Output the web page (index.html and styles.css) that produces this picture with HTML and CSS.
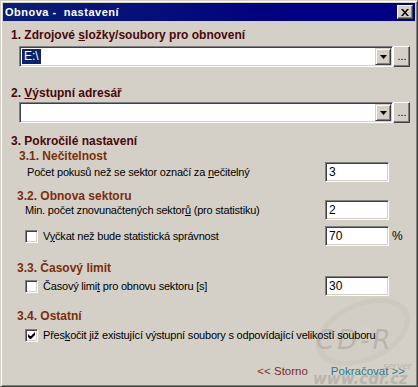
FILE: index.html
```html
<!DOCTYPE html>
<html lang="cs">
<head>
    <meta charset="UTF-8">
    <title>Obnova - nastavení</title>
    <link rel="stylesheet" href="styles.css">
</head>
<body>

<div class="window">
    <div class="caption">
        <span class="caption-title">Obnova -  nastavení</span>
        <div class="caption-close">
            <svg width="8" height="7" viewBox="0 0 8 7"><path d="M0 0h2l2 2.5 2-2.5h2l-3 3.5 3 3.5h-2l-2-2.5-2 2.5h-2l3-3.5z" fill="#000"/></svg>
        </div>
    </div>

    <div class="content">
        <svg class="watermark" width="116" height="100" viewBox="0 0 116 100">
            <ellipse cx="58" cy="42" rx="50" ry="30" transform="rotate(-24 58 42)" fill="#cdc9c1"/>
            <ellipse cx="58" cy="42" rx="44" ry="25" transform="rotate(-24 58 42)" fill="#d2cec6"/>
            <ellipse cx="58" cy="42" rx="9" ry="5" transform="rotate(-24 58 42)" fill="#d4d0c8"/>
            <text x="11" y="59" font-family="DejaVu Sans, sans-serif" font-size="26" font-style="italic" letter-spacing="3" fill="#b9b5ad">CD-R</text>
            <text x="78" y="79" font-family="DejaVu Sans, sans-serif" font-size="9" font-style="italic" fill="#b9b5ad">server</text>
            <text x="8" y="94" font-family="DejaVu Sans, sans-serif" font-size="15" font-weight="bold" font-style="italic" fill="#b9b5ad">www.cdr.cz</text>
        </svg>

        <div class="section-title">1. Zdrojové <u>s</u>ložky/soubory pro obnovení</div>
        <div class="path-row">
            <div class="combo">
                <div class="combo-field"><span class="selected">E:\</span></div>
                <div class="combo-btn"><svg width="7" height="4" viewBox="0 0 7 4"><path d="M0 0h7l-3.5 4z" fill="#000"/></svg></div>
            </div>
            <div class="browse">...</div>
        </div>

        <div class="section-title second">2. <u>V</u>ýstupní adresář</div>
        <div class="path-row tight">
            <div class="combo">
                <div class="combo-field"></div>
                <div class="combo-btn"><svg width="7" height="4" viewBox="0 0 7 4"><path d="M0 0h7l-3.5 4z" fill="#000"/></svg></div>
            </div>
            <div class="browse">...</div>
        </div>

        <div class="section-title third">3. Pokročilé nastavení</div>

        <div class="sub-title first">3.1. Nečitelnost</div>
        <div class="option-row row-retries">
            <span class="option-label indent"><span>Počet pokusů než se sektor označí za <u>n</u>ečitelný</span></span>
            <div class="field">3</div>
            <span class="unit"></span>
        </div>

        <div class="sub-title sector">3.2. Obnova sektoru</div>
        <div class="option-row row-min">
            <span class="option-label"><span>Min. počet znovunačtených sektor<u>ů</u> (pro statistiku)</span></span>
            <div class="field">2</div>
            <span class="unit"></span>
        </div>
        <div class="option-row row-wait">
            <span class="option-label"><span class="checkbox"></span><span>V<u>y</u>čkat než bude statistická správnost</span></span>
            <div class="field">70</div>
            <span class="unit">%</span>
        </div>

        <div class="sub-title limit">3.3. Časový limit</div>
        <div class="option-row row-limit">
            <span class="option-label"><span class="checkbox"></span><span>Časový limi<u>t</u> pro obnovu sektoru [s]</span></span>
            <div class="field">30</div>
            <span class="unit"></span>
        </div>

        <div class="sub-title other">3.4. Ostatní</div>
        <div class="option-row row-skip">
            <span class="option-label"><span class="checkbox"><svg width="7" height="7" viewBox="0 0 7 7"><path d="M0 2v3l2 2h1l4-4v-3l-4 4h-1z" fill="#000"/></svg></span><span>Přes<u>k</u>očit již existující výstupní soubory s odpovídající velikostí souboru</span></span>
        </div>

        <div class="actions">
            <span class="link cancel">&lt;&lt; Storno</span>
            <span class="link next">Pokračovat &gt;&gt;</span>
        </div>
    </div>
</div>

</body>
</html>
```

FILE: styles.css
```css
body {
    margin: 0;
    background: #d4d0c8;
    font-family: "Liberation Sans", Arial, sans-serif;
    font-size: 11px;
    color: #000;
}
u {
    text-decoration: underline;
    text-underline-offset: 1px;
}
.window {
    box-sizing: border-box;
    width: 418px;
    height: 387px;
    background: #d4d0c8;
    border: 1px solid;
    border-color: #d4d0c8 #404040 #404040 #d4d0c8;
    box-shadow: inset 1px 1px #fff, inset -1px -1px #808080;
    padding: 2px;
    display: flex;
    flex-direction: column;
}
.caption {
    height: 18px;
    flex-shrink: 0;
    background: linear-gradient(to right, #0a1f72, #000080 70%);
    display: flex;
    align-items: center;
    justify-content: space-between;
    padding: 0 2px 0 2px;
}
.caption-title {
    color: #fff;
    font-weight: bold;
    font-size: 11px;
    white-space: pre;
    letter-spacing: 0.5px;
}
.caption-close {
    box-sizing: border-box;
    width: 16px;
    height: 14px;
    background: #d4d0c8;
    border: 1px solid;
    border-color: #fff #404040 #404040 #fff;
    box-shadow: inset -1px -1px #808080;
    display: flex;
    align-items: center;
    justify-content: center;
    padding-right: 1px;
}
.content {
    position: relative;
    flex: 1;
    padding: 7px 0 0 8px;
}
.watermark {
    position: absolute;
    left: 302px;
    top: 269px;
}
.section-title {
    position: relative;
    font-weight: bold;
    font-size: 12px;
    line-height: 14px;
    color: #4a0808;
}
.section-title.second {
    margin-top: 19px;
}
.section-title.third {
    margin-top: 11px;
}
.path-row {
    position: relative;
    display: flex;
    margin: 4px 0 0 8px;
}
.path-row.tight {
    margin-top: 2px;
}
.combo {
    box-sizing: border-box;
    width: 374px;
    height: 21px;
    background: #fff;
    border: 1px solid;
    border-color: #808080 #fff #fff #808080;
    box-shadow: inset 1px 1px #404040, inset -1px -1px #d4d0c8;
    padding: 1px;
    display: flex;
}
.combo-field {
    flex: 1;
    padding: 1px 0 0 1px;
}
.selected {
    display: inline-block;
    background: #0a246a;
    color: #fff;
    line-height: 15px;
    padding: 0 2px;
    font-size: 12px;
}
.combo-btn {
    box-sizing: border-box;
    width: 16px;
    height: 17px;
    background: #d4d0c8;
    border: 1px solid;
    border-color: #d4d0c8 #404040 #404040 #d4d0c8;
    box-shadow: inset 1px 1px #fff, inset -1px -1px #808080;
    display: flex;
    align-items: center;
    justify-content: center;
}
.browse {
    box-sizing: border-box;
    width: 17px;
    height: 21px;
    background: #d4d0c8;
    border: 1px solid;
    border-color: #fff #404040 #404040 #fff;
    box-shadow: inset -1px -1px #808080;
    text-align: center;
    line-height: 19px;
    font-size: 11px;
    padding-left: 1px;
}
.sub-title {
    position: relative;
    font-weight: bold;
    font-size: 12px;
    line-height: 12px;
    color: #7b2f08;
    margin-left: 6px;
}
.sub-title.first {
    margin: 2px 0 0 8px;
}
.sub-title.sector {
    margin-top: 8px;
}
.sub-title.limit {
    margin-top: 16px;
}
.sub-title.other {
    margin-top: 14px;
}
.option-row {
    position: relative;
    display: flex;
    align-items: center;
    height: 20px;
    margin-left: 14px;
    letter-spacing: -0.2px;
}
.row-retries {
    margin-top: 0;
}
.row-min {
    margin-top: -2px;
}
.row-wait {
    margin-top: 6px;
}
.row-limit {
    margin-top: 2px;
}
.row-skip {
    margin-top: 3px;
}
.option-label {
    flex: 1;
    display: flex;
    align-items: center;
    white-space: nowrap;
}
.option-label.indent {
    padding-left: 2px;
}
.checkbox {
    box-sizing: border-box;
    width: 13px;
    height: 13px;
    flex-shrink: 0;
    background: #fff;
    border: 1px solid;
    border-color: #808080 #fff #fff #808080;
    box-shadow: inset 1px 1px #404040, inset -1px -1px #d4d0c8;
    margin-right: 5px;
    display: flex;
    align-items: center;
    justify-content: center;
}
.field {
    box-sizing: border-box;
    width: 64px;
    height: 20px;
    background: #fff;
    border: 1px solid;
    border-color: #808080 #fff #fff #808080;
    box-shadow: inset 1px 1px #404040, inset -1px -1px #d4d0c8;
    padding: 2px 3px;
    font-size: 12px;
    line-height: 15px;
    letter-spacing: 0;
}
.unit {
    width: 26px;
    padding-left: 3px;
    box-sizing: border-box;
    font-size: 12px;
}
.actions {
    position: relative;
    display: flex;
    justify-content: flex-end;
    gap: 23px;
    margin-top: 19px;
    padding-right: 10px;
    line-height: 14px;
}
.link {
    font-size: 11.5px;
}
.cancel {
    color: #7a2e2e;
}
.next {
    color: #2e7d80;
}
```
